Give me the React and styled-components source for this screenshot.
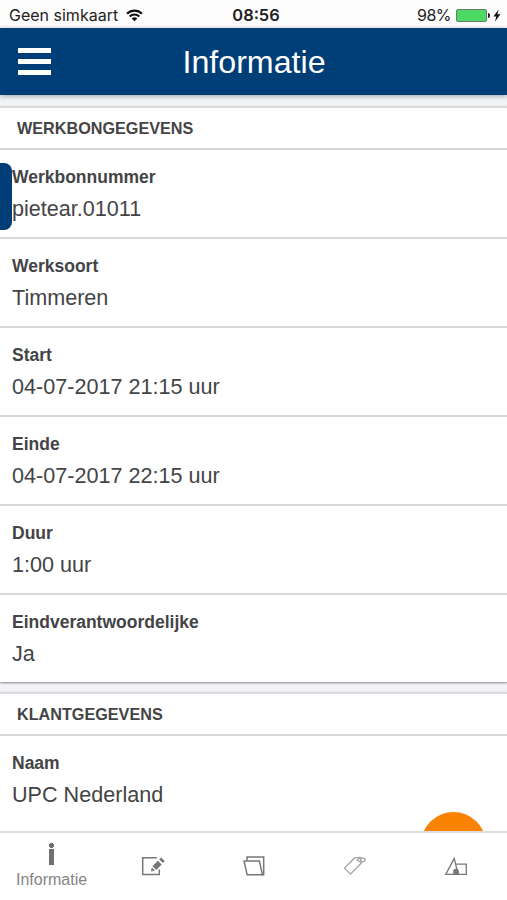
import React from 'react';
import styled, { createGlobalStyle } from 'styled-components';

const colors = {
  primary: '#003e77',
  accent: '#f98200',
  text: '#444446',
  line: '#d6d8da',
  icon: '#777777',
};

const sections = [
  {
    title: 'WERKBONGEGEVENS',
    rows: [
      { label: 'Werkbonnummer', value: 'pietear.01011' },
      { label: 'Werksoort', value: 'Timmeren' },
      { label: 'Start', value: '04-07-2017 21:15 uur' },
      { label: 'Einde', value: '04-07-2017 22:15 uur' },
      { label: 'Duur', value: '1:00 uur' },
      { label: 'Eindverantwoordelijke', value: 'Ja' },
    ],
  },
  {
    title: 'KLANTGEGEVENS',
    rows: [{ label: 'Naam', value: 'UPC Nederland' }],
  },
];

const WifiIcon = () => (
  <svg width="17" height="13" viewBox="0 0 17 13" fill="none" stroke="#111" strokeWidth="2.1">
    <path d="M1 4.7a10.7 10.7 0 0 1 15 0" />
    <path d="M3.7 7.4a6.9 6.9 0 0 1 9.6 0" />
    <path d="M8.5 12.3 5.7 9.5a4 4 0 0 1 5.6 0z" fill="#111" stroke="none" />
  </svg>
);

const BoltIcon = () => (
  <svg width="8" height="13" viewBox="0 0 8 13" fill="#111">
    <path d="M5.6 0.6 0.4 7.4h2.9L2 12.4 7.5 5.2H4.4z" />
  </svg>
);

const EditIcon = () => (
  <svg width="24" height="20" viewBox="0 0 24 20" fill="none" stroke={colors.icon} strokeWidth="1.5">
    <path d="M15.8 1.8H1.7v16.6h16.6v-5" />
    <path d="m13.4 12.2 5.4-5.6" strokeWidth="5.4" />
    <path d="m20.1 5.2 1.8-1.9" strokeWidth="5" />
    <path d="m10.4 15 .7-3 2.3 2.3z" fill={colors.icon} strokeWidth="0.8" />
  </svg>
);

const FolderIcon = () => (
  <svg width="22" height="20" viewBox="0 0 22 20" fill="none" stroke={colors.icon} strokeWidth="1.5">
    <path d="M4 4.8V.9h16.7v17.8h-2.1" />
    <path d="M1 4.9h15.4l3 13.9H4.2z" strokeLinejoin="round" />
  </svg>
);

const TagIcon = () => (
  <svg width="24" height="20" viewBox="0 0 24 20" fill="none" stroke="#a0a0a0" strokeWidth="1.3">
    <path d="M1.4 12.1 11.8 1.8l5.7-.5.6 5.9L7.5 18.1z" strokeLinejoin="round" />
    <path d="M14.2 4.2c2-2.2 6.8-2.8 8-.9.8 1.4-2.7 3.1-5.2 2.5-1.5-.3-2-1-2.8-1.6z" />
  </svg>
);

const ShapesIcon = () => (
  <svg width="24" height="20" viewBox="0 0 24 20" fill="none" stroke={colors.icon} strokeWidth="1.3">
    <path d="M1.8 18.4 10.2 2.4l3.9 16z" />
    <path d="M12.2 8.2h10.1v10.2h-9.5" />
    <path d="M9.2 18.6v-3a2.8 2.8 0 0 1 5.6 0v3z" fill={colors.icon} stroke="none" />
  </svg>
);

const App = () => {
  return (
    <>
      <GlobalStyle />
      <Screen>
        <StatusBar>
          <Carrier>
            <span>Geen simkaart</span>
            <WifiIcon />
          </Carrier>
          <Clock>08:56</Clock>
          <Power>
            <span>98%</span>
            <Battery />
            <BoltIcon />
          </Power>
        </StatusBar>
        <Header>
          <MenuButton aria-label="Menu">
            <MenuLine />
            <MenuLine />
            <MenuLine />
          </MenuButton>
          <Title>Informatie</Title>
        </Header>
        <Content>
          {sections.map((section) => (
            <Card key={section.title}>
              <CardTitle>{section.title}</CardTitle>
              {section.rows.map((row) => (
                <Row key={row.label}>
                  <Label>{row.label}</Label>
                  <Value>{row.value}</Value>
                </Row>
              ))}
            </Card>
          ))}
          <DrawerHandle />
          <FloatingButton />
        </Content>
        <TabBar>
          <Tab $active>
            <InfoIcon />
            <TabLabel>Informatie</TabLabel>
          </Tab>
          <Tab><EditIcon /></Tab>
          <Tab><FolderIcon /></Tab>
          <Tab><TagIcon /></Tab>
          <Tab><ShapesIcon /></Tab>
        </TabBar>
      </Screen>
    </>
  );
};

export default App;

const GlobalStyle = createGlobalStyle`
  * {
    box-sizing: border-box;
  }
  body {
    margin: 0;
    background: #fff;
    font-family: 'Liberation Sans', Arial, sans-serif;
    color: ${colors.text};
  }
`;

const Screen = styled.div`
  display: flex;
  flex-direction: column;
  width: 100%;
  height: 900px;
  overflow: hidden;
`;

const StatusBar = styled.div`
  flex: none;
  display: grid;
  grid-template-columns: 1fr auto 1fr;
  align-items: center;
  height: 28px;
  padding: 2px 6px 0 9px;
  font-family: Inter, sans-serif;
  font-size: 16px;
  line-height: 20px;
  color: #222;
  background: #fdfdfd;
`;

const Carrier = styled.div`
  display: flex;
  align-items: center;
  gap: 8px;
`;

const Clock = styled.div`
  padding-left: 2px;
  font-weight: 600;
  font-size: 16.4px;
`;

const Power = styled.div`
  display: flex;
  align-items: center;
  justify-content: flex-end;
  gap: 5px;
  letter-spacing: -0.5px;
`;

const Battery = styled.div`
  position: relative;
  width: 31px;
  height: 13px;
  margin-right: 1px;
  border: 1px solid #6b7a6e;
  border-radius: 2px;
  background: #4cd964;
  &::after {
    content: '';
    position: absolute;
    top: 3px;
    right: -4px;
    width: 2px;
    height: 5px;
    border-radius: 0 2px 2px 0;
    background: #222;
  }
`;

const Header = styled.header`
  flex: none;
  display: grid;
  grid-template-columns: 70px 1fr 70px;
  align-items: center;
  height: 67px;
  background: ${colors.primary};
  color: #fff;
  z-index: 1;
  box-shadow: 0 1px 5px rgba(0, 0, 0, 0.35);
`;

const MenuButton = styled.button`
  display: flex;
  flex-direction: column;
  gap: 6px;
  padding: 0 0 0 18px;
  border: none;
  background: none;
`;

const MenuLine = styled.span`
  width: 33px;
  height: 5px;
  background: #fff;
`;

const Title = styled.h1`
  margin: 0;
  padding-left: 1px;
  font-size: 32.2px;
  font-weight: normal;
  line-height: 40px;
  text-align: center;
`;

const Content = styled.main`
  position: relative;
  flex: 1;
  min-height: 0;
  display: flex;
  flex-direction: column;
  gap: 10px;
  padding-top: 11px;
  overflow: hidden;
  background: #f1f3f6;
`;

const Card = styled.section`
  flex: none;
  background: #fff;
  border-top: 2px solid #d9dbdd;
  box-shadow: 0 1px 2px rgba(0, 0, 0, 0.45);
  /* the last card runs on under the tab bar */
  &:nth-of-type(2) {
    padding-bottom: 20px;
  }
`;

const CardTitle = styled.h2`
  height: 40px;
  margin: 0;
  padding: 1px 17px 0;
  font-size: 16.2px;
  font-weight: bold;
  line-height: 39px;
`;

const Row = styled.div`
  height: 89px;
  padding: 16px 12px 0;
  border-top: 2px solid ${colors.line};
`;

const Label = styled.div`
  font-size: 17.5px;
  font-weight: bold;
  line-height: 22px;
`;

const Value = styled.div`
  margin-top: 8px;
  font-size: 21.6px;
  line-height: 26px;
`;

const DrawerHandle = styled.div`
  position: absolute;
  top: 68px;
  left: 0;
  width: 12px;
  height: 67px;
  border-radius: 0 8px 8px 0;
  background: ${colors.primary};
`;

const FloatingButton = styled.div`
  position: absolute;
  right: 21.5px;
  bottom: -46px;
  width: 65px;
  height: 65px;
  border-radius: 50%;
  background: ${colors.accent};
`;

const TabBar = styled.nav`
  flex: none;
  display: grid;
  grid-template-columns: repeat(5, 1fr);
  height: 69px;
  padding-left: 1px;
  border-top: 2px solid #dddddd;
  background: #fff;
`;

const Tab = styled.div`
  display: flex;
  flex-direction: column;
  align-items: center;
  padding-top: ${({ $active }) => ($active ? '10px' : '23px')};
`;

const InfoIcon = styled.span`
  width: 5px;
  height: 22px;
  background:
    radial-gradient(circle at 50% 2.5px, #707070 2.4px, transparent 2.8px),
    linear-gradient(#707070, #707070) 0 6px / 5px 16px no-repeat;
`;

const TabLabel = styled.span`
  margin-top: 5px;
  font-size: 16px;
  line-height: 20px;
  color: #858585;
`;
